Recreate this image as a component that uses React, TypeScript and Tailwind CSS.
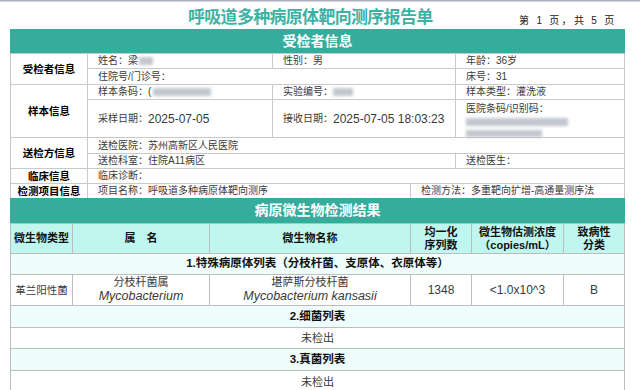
const font = '[font-family:"Liberation_Sans","Noto_Sans_CJK_SC",sans-serif]';

const Blur = ({ w, className = '' }: { w: number; className?: string }) => (
  <span
    className={`inline-block h-[8px] bg-gray-400/60 blur-[1.5px] ${className}`}
    style={{ width: w }}
  />
);

// info cells on the top part
const cell = 'bg-white flex items-center pl-[10px] text-[10px] leading-none text-[#3a3a3a] whitespace-nowrap';
const label = 'bg-white flex items-center justify-center text-[10.5px] leading-none font-bold text-black whitespace-nowrap';

// result table cells
const rc = 'bg-white flex flex-col items-center justify-center text-center leading-none text-[#3a3a3a] whitespace-nowrap';
const hc = 'bg-[#bff6f0] flex flex-col items-center justify-center text-center font-bold text-[11px] leading-[12.5px] text-[#111]';
const sec = 'col-span-6 bg-[#effdfd] flex items-center justify-center font-bold text-[11.5px] leading-none text-[#111]';

const Bar = ({ title, h }: { title: string; h: string }) => (
  <div className={`${h} bg-[#36ac9c] flex items-center justify-center text-white font-bold text-[14px]`}>
    {title}
  </div>
);

export default function App() {
  return (
    <div className={`w-[640px] h-[390px] overflow-hidden bg-white ${font}`}>
      <div className="h-[2px] bg-gradient-to-b from-gray-400 to-gray-200" />
      {/* Title */}
      <div className="relative h-[27px]">
        <div className="absolute left-[188px] top-[3px] text-[17px] font-bold text-[#3cb2a3] tracking-[-0.7px]">
          呼吸道多种病原体靶向测序报告单
        </div>
        <div className="absolute left-[519px] top-[11px] text-[10px] text-[#222] tracking-[2.3px]">
          第 1 页，共 5 页
        </div>
      </div>

      <div className="ml-[10px] w-[615px]">
        <Bar title="受检者信息" h="h-[24px]" />

        {/* Patient / sample info */}
        <div className="grid grid-cols-[76px_184px_137px_44px_168px] grid-rows-[14px_15px_14px_37px_15px_14px_14px_14px] gap-px bg-[#c9c9c9] px-px pt-px">
          <div className={`${label} row-span-2`}>受检者信息</div>
          <div className={cell}>姓名：梁<Blur w={14} className="ml-[1px]" /></div>
          <div className={`${cell} col-span-2`}>性别：男</div>
          <div className={cell}>年龄：36岁</div>

          <div className={`${cell} col-span-3`}>住院号/门诊号：</div>
          <div className={cell}>床号：31</div>

          <div className={`${label} row-span-2`}>样本信息</div>
          <div className={cell}>样本条码：(<Blur w={58} className="ml-[2px]" /></div>
          <div className={`${cell} col-span-2`}>实验编号：<Blur w={20} /></div>
          <div className={cell}>样本类型：灌洗液</div>

          <div className={cell}>采样日期：<span className="text-[12px]">2025-07-05</span></div>
          <div className={`${cell} col-span-2`}>接收日期：<span className="text-[12px]">2025-07-05 18:03:23</span></div>
          <div className={`${cell} flex-col !items-start justify-start pt-[4px]`}>
            <div>医院条码/识别码：</div>
            <Blur w={102} className="mt-[4px]" />
            <Blur w={76} className="mt-[4px]" />
          </div>

          <div className={`${label} row-span-2`}>送检方信息</div>
          <div className={`${cell} col-span-4`}>送检医院：苏州高新区人民医院</div>

          <div className={`${cell} col-span-3`}>送检科室：住院A11病区</div>
          <div className={cell}>送检医生：</div>

          <div className={label}>临床信息</div>
          <div className={`${cell} col-span-4`}>临床诊断：</div>

          <div className={label}>检测项目信息</div>
          <div className={`${cell} col-span-2`}>项目名称：呼吸道多种病原体靶向测序</div>
          <div className={`${cell} col-span-2`}>检测方法：多重靶向扩增-高通量测序法</div>
        </div>

        <Bar title="病原微生物检测结果" h="h-[25px]" />

        {/* Results */}
        <div className="grid grid-cols-[61px_136px_200px_60px_91px_60px] grid-rows-[29px_20px_30px_21px_20px_21px_22px] gap-px bg-[#bdbdbd] px-px pt-px">
          <div className={hc}>微生物类型</div>
          <div className={hc}>属&emsp;名</div>
          <div className={hc}>微生物名称</div>
          <div className={hc}><span>均一化</span><span>序列数</span></div>
          <div className={hc}><span>微生物估测浓度</span><span>（copies/mL）</span></div>
          <div className={hc}><span>致病性</span><span>分类</span></div>

          <div className={sec}>1.特殊病原体列表（分枝杆菌、支原体、衣原体等）</div>

          <div className={`${rc} text-[10.5px]`}>革兰阳性菌</div>
          <div className={`${rc} text-[11px] gap-[2px]`}>
            <span>分枝杆菌属</span>
            <i className="text-[12.5px]">Mycobacterium</i>
          </div>
          <div className={`${rc} text-[11px] gap-[2px]`}>
            <span>堪萨斯分枝杆菌</span>
            <i className="text-[12.5px]">Mycobacterium kansasii</i>
          </div>
          <div className={`${rc} text-[12px]`}>1348</div>
          <div className={`${rc} text-[12px]`}>&lt;1.0x10^3</div>
          <div className={`${rc} text-[12px]`}>B</div>

          <div className={sec}>2.细菌列表</div>
          <div className={`${rc} col-span-6 text-[11px]`}>未检出</div>
          <div className={sec}>3.真菌列表</div>
          <div className={`${rc} col-span-6 text-[11px]`}>未检出</div>
        </div>
      </div>
    </div>
  );
}
